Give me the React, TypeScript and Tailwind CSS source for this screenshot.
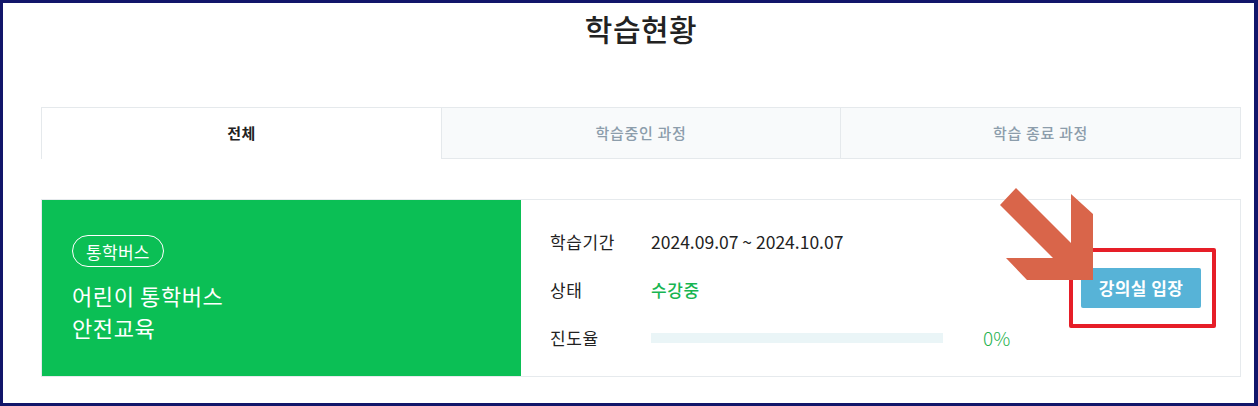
import React from "react";

const tabs = [
  { label: "전체", active: true },
  { label: "학습중인 과정", active: false },
  { label: "학습 종료 과정", active: false },
];

function Arrow() {
  return (
    <svg
      className="absolute left-[958px] top-[-12px]"
      width="93"
      height="92"
      viewBox="0 0 93 92"
    >
      <polygon
        points="16,0 71,55 71,6 93,26 93,92 27,92 6,70 53,70 0,17"
        fill="#d9654a"
      />
    </svg>
  );
}

function InfoRow({ label, children }: { label: string; children: React.ReactNode }) {
  return (
    <div className="flex items-center h-6">
      <span className="w-[101px] text-[17px] tracking-[0.6px] text-[#222]">{label}</span>
      {children}
    </div>
  );
}

export default function App() {
  return (
    <div
      className="w-[1258px] h-[406px] box-border border-t-[3px] border-l-[3px] border-r-4 border-b-[3px] border-[#12166a] bg-white overflow-hidden"
      style={{ fontFamily: '"Noto Sans CJK KR", "Noto Sans", sans-serif' }}
    >
      <div className="w-[1200px] ml-[38px] pt-[5px]">
        <h1 className="text-center text-[30px] leading-[40px] font-medium tracking-[0.5px] text-[#222]">
          학습현황
        </h1>

        <div className="flex mt-[59px] h-[52px]">
          {tabs.map((tab, i) => (
            <div
              key={tab.label}
              className={
                tab.active
                  ? "w-[400px] flex items-center justify-center border-t border-l border-[#e5e9ec] bg-white text-[15px] tracking-[0.5px] font-bold text-[#222]"
                  : i === 1
                  ? "w-[400px] flex items-center justify-center border border-[#e5e9ec] bg-[#f8fafb] text-[15px] tracking-[0.7px] font-medium text-[#8c9dab]"
                  : "w-[400px] flex items-center justify-center border-y border-r border-[#e5e9ec] bg-[#f8fafb] text-[15px] tracking-[0.7px] font-medium text-[#8c9dab]"
              }
            >
              {tab.label}
            </div>
          ))}
        </div>

        <div className="relative mt-[40px] flex h-[178px] border border-[#e6eaed]">
          <div className="w-[479px] bg-[#0bbf55] pl-[30px] pt-[35px] text-white">
            <span className="inline-flex items-center h-[32px] px-[13px] rounded-full border border-white text-[17px] tracking-[0.3px] leading-none">
              통학버스
            </span>
            <p className="mt-[12px] text-[22px] tracking-[0.6px] leading-[32px]">
              어린이 통학버스
              <br />
              안전교육
            </p>
          </div>

          <div className="flex-1 flex items-center justify-between pl-[29px] pr-[39px] pt-[4px]">
            <div className="flex flex-col gap-6">
              <InfoRow label="학습기간">
                <span className="text-[17.5px] text-[#222]">2024.09.07 ~ 2024.10.07</span>
              </InfoRow>
              <InfoRow label="상태">
                <span className="text-[17px] tracking-[0.6px] font-medium text-[#17b552]">수강중</span>
              </InfoRow>
              <InfoRow label="진도율">
                <div className="w-[292px] h-[10px] bg-[#eaf5f7]" />
                <span className="ml-[40px] text-[19px] font-light text-[#26b24f]">0%</span>
              </InfoRow>
            </div>

            <button className="w-[120px] h-[40px] -mt-[4px] rounded-[2px] bg-[#57b3d7] text-white text-[17px] tracking-[0.4px] font-semibold">
              강의실 입장
            </button>
          </div>

          <div className="absolute left-[1027px] top-[48px] w-[147px] h-[80px] border-4 border-[#e61e28] rounded-[2px]" />
          <Arrow />
        </div>
      </div>
    </div>
  );
}
